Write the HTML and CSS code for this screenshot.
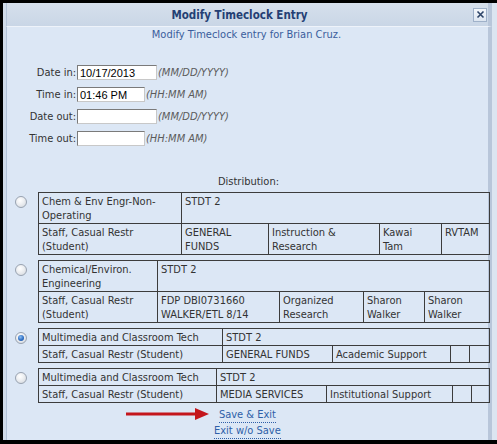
FILE: index.html
```html
<!DOCTYPE html>
<html>
<head>
<meta charset="utf-8">
<link rel="stylesheet" href="styles.css">
</head>
<body>
<div class="frame">
  <div class="titlebar">
    <div class="title">Modify Timeclock Entry</div>
    <div class="close">
      <svg width="13" height="13" viewBox="0 0 13 13"><path d="M3.5 3.5 L9.5 9.5 M9.5 3.5 L3.5 9.5" stroke="#2d4468" stroke-width="1.6" fill="none"/></svg>
    </div>
  </div>
  <div class="content">
    <div class="subtitle">Modify Timeclock entry for Brian Cruz.</div>
    <div class="form">
      <div class="frow"><span class="flabel">Date in:</span><input class="inp inp-date" value="10/17/2013"><span class="hint">(MM/DD/YYYY)</span></div>
      <div class="frow"><span class="flabel">Time in:</span><input class="inp inp-time" value="01:46 PM"><span class="hint">(HH:MM AM)</span></div>
      <div class="frow"><span class="flabel">Date out:</span><input class="inp inp-date" value=""><span class="hint">(MM/DD/YYYY)</span></div>
      <div class="frow"><span class="flabel">Time out:</span><input class="inp inp-time" value=""><span class="hint">(HH:MM AM)</span></div>
    </div>
    <div class="dist-label">Distribution:</div>

    <div class="entry">
      <span class="radio"></span>
      <table class="dist">
        <colgroup><col class="c1-1"><col class="c1-2"><col class="c1-3"><col class="c1-4"><col class="c1-5"></colgroup>
        <tr><td>Chem &amp; Env Engr-Non-Operating</td><td colspan="4">STDT 2</td></tr>
        <tr><td>Staff, Casual Restr (Student)</td><td>GENERAL FUNDS</td><td>Instruction &amp; Research</td><td>Kawai Tam</td><td>RVTAM</td></tr>
      </table>
    </div>

    <div class="entry">
      <span class="radio"></span>
      <table class="dist">
        <colgroup><col class="c2-1"><col class="c2-2"><col class="c2-3"><col class="c2-4"><col class="c2-5"></colgroup>
        <tr><td>Chemical/Environ. Engineering</td><td colspan="4">STDT 2</td></tr>
        <tr><td>Staff, Casual Restr (Student)</td><td>FDP DBI0731660 WALKER/ETL 8/14</td><td>Organized Research</td><td>Sharon Walker</td><td>Sharon Walker</td></tr>
      </table>
    </div>

    <div class="entry">
      <span class="radio on"></span>
      <table class="dist">
        <colgroup><col class="c3-1"><col class="c3-2"><col class="c3-3"><col class="c3-4"><col class="c3-5"></colgroup>
        <tr><td>Multimedia and Classroom Tech</td><td colspan="4">STDT 2</td></tr>
        <tr><td>Staff, Casual Restr (Student)</td><td>GENERAL FUNDS</td><td>Academic Support</td><td></td><td></td></tr>
      </table>
    </div>

    <div class="entry">
      <span class="radio"></span>
      <table class="dist">
        <colgroup><col class="c4-1"><col class="c4-2"><col class="c4-3"><col class="c4-4"><col class="c4-5"></colgroup>
        <tr><td>Multimedia and Classroom Tech</td><td colspan="4">STDT 2</td></tr>
        <tr><td>Staff, Casual Restr (Student)</td><td>MEDIA SERVICES</td><td>Institutional Support</td><td></td><td></td></tr>
      </table>
    </div>

    <div class="actions">
      <svg class="arrow" width="83" height="12" viewBox="0 0 83 12"><rect x="0" y="4.5" width="71" height="3" fill="#c4161c"/><polygon points="69,0 83,6 69,12" fill="#c4161c"/></svg>
      <div class="links">
        <a class="link" href="#">Save &amp; Exit</a>
        <a class="link" href="#">Exit w/o Save</a>
      </div>
    </div>
  </div>
</div>
</body>
</html>
```
FILE: styles.css
```css
html, body {
  margin: 0;
  padding: 0;
  background: #000;
}
body {
  width: 497px;
  height: 444px;
  overflow: hidden;
  font-family: "DejaVu Sans Condensed", "DejaVu Sans", sans-serif;
  font-stretch: condensed;
  font-size: 11px;
  color: #333;
}
.frame {
  margin: 3px 0 0 3px;
  width: 494px;
  height: 437px;
  box-sizing: border-box;
  border-left: 3px solid #d0dbe9;
  border-right: 5px solid #dbe5f1;
  background: #dce7f5;
  display: flex;
  flex-direction: column;
}
.titlebar {
  height: 24px;
  box-sizing: border-box;
  display: flex;
  align-items: center;
  background: linear-gradient(#d6e0ec, #c9d6e6);
  border-left: 1px solid #b3c3d8;
  border-right: 4px solid #b8c6da;
  border-bottom: 1px solid #eef3fa;
}
.title {
  flex: 1;
  text-align: center;
  font-weight: bold;
  font-size: 11.5px;
  color: #243f74;
  padding-left: 3px;
}
.close {
  width: 14px;
  height: 14px;
  box-sizing: border-box;
  border: 1px solid #9fb1c9;
  background: linear-gradient(#f4f7fb, #dde6f1);
  margin: 0 1px 0 4px;
  display: flex;
}
.close svg { display: block; margin: -0.5px; }
.content {
  flex: 1;
  border-left: 1px solid #b3c3d8;
  border-right: 4px solid #b8c6da;
  padding-top: 1px;
}
.subtitle {
  text-align: center;
  line-height: 14px;
  color: #3a5d9c;
  font-size: 11px;
  padding-right: 2px;
}
.form {
  margin-top: 23px;
}
.frow {
  display: flex;
  align-items: center;
  height: 15px;
  margin-bottom: 7px;
}
.flabel {
  width: 69px;
  text-align: right;
  padding-right: 1px;
  color: #333;
}
.inp {
  box-sizing: border-box;
  height: 15px;
  margin: 0;
  padding: 0 2px;
  border: 1px solid #7a7a7a;
  border-right-color: #c8c8c8;
  border-bottom-color: #c8c8c8;
  background: #fff;
  font-family: "Liberation Sans", Arial, sans-serif;
  font-size: 11px;
  color: #000;
}
.inp-date { width: 80px; }
.inp-time { width: 68px; }
.hint {
  margin-left: 1px;
  font-style: italic;
  color: #5b5b5b;
}
.dist-label {
  margin-top: 29px;
  text-align: center;
  line-height: 14px;
  padding-left: 2px;
}
.entry {
  display: flex;
  align-items: flex-start;
  margin-top: 5px;
}
.dist-label + .entry { margin-top: 3px; }
.radio {
  flex: none;
  width: 12px;
  height: 12px;
  box-sizing: border-box;
  border-radius: 50%;
  border: 1px solid #98a2b0;
  background: radial-gradient(circle at 40% 35%, #ffffff 0%, #eceef1 45%, #cfd4db 100%);
  margin: 4px 11px 0 8px;
  position: relative;
}
.radio.on::after {
  content: "";
  position: absolute;
  left: 2px;
  top: 2px;
  width: 6px;
  height: 6px;
  border-radius: 50%;
  background: radial-gradient(circle at 40% 35%, #8fc0f2 0%, #2f6fc4 55%, #1c4f9a 100%);
}
.dist {
  border-collapse: collapse;
  table-layout: fixed;
  width: 452px;
  border: 1px solid #3c3c3c;
}
.dist td {
  border: 1px solid #3c3c3c;
  padding: 2px 8px 0 3px;
  line-height: 14px;
  vertical-align: top;
  color: #333;
  overflow: hidden;
}
.c1-1 { width: 143px; } .c1-2 { width: 87px; } .c1-3 { width: 111px; } .c1-4 { width: 62px; } .c1-5 { width: 48px; }
.c2-1 { width: 119px; } .c2-2 { width: 122px; } .c2-3 { width: 84px; } .c2-4 { width: 61px; } .c2-5 { width: 65px; }
.c3-1 { width: 184px; } .c3-2 { width: 110px; } .c3-3 { width: 118px; } .c3-4 { width: 19px; } .c3-5 { width: 20px; }
.c4-1 { width: 178px; } .c4-2 { width: 110px; } .c4-3 { width: 126px; } .c4-4 { width: 19px; } .c4-5 { width: 18px; }
.actions {
  display: flex;
  align-items: flex-start;
  margin-top: 5px;
  padding-left: 119px;
}
.arrow {
  display: block;
}
.links {
  margin-left: 5px;
  display: flex;
  flex-direction: column;
  align-items: center;
}
.link {
  color: #2f5fa8;
  text-decoration: none;
  border-bottom: 1px dotted #2f5fa8;
  line-height: 14px;
  margin-bottom: 1px;
}
```
